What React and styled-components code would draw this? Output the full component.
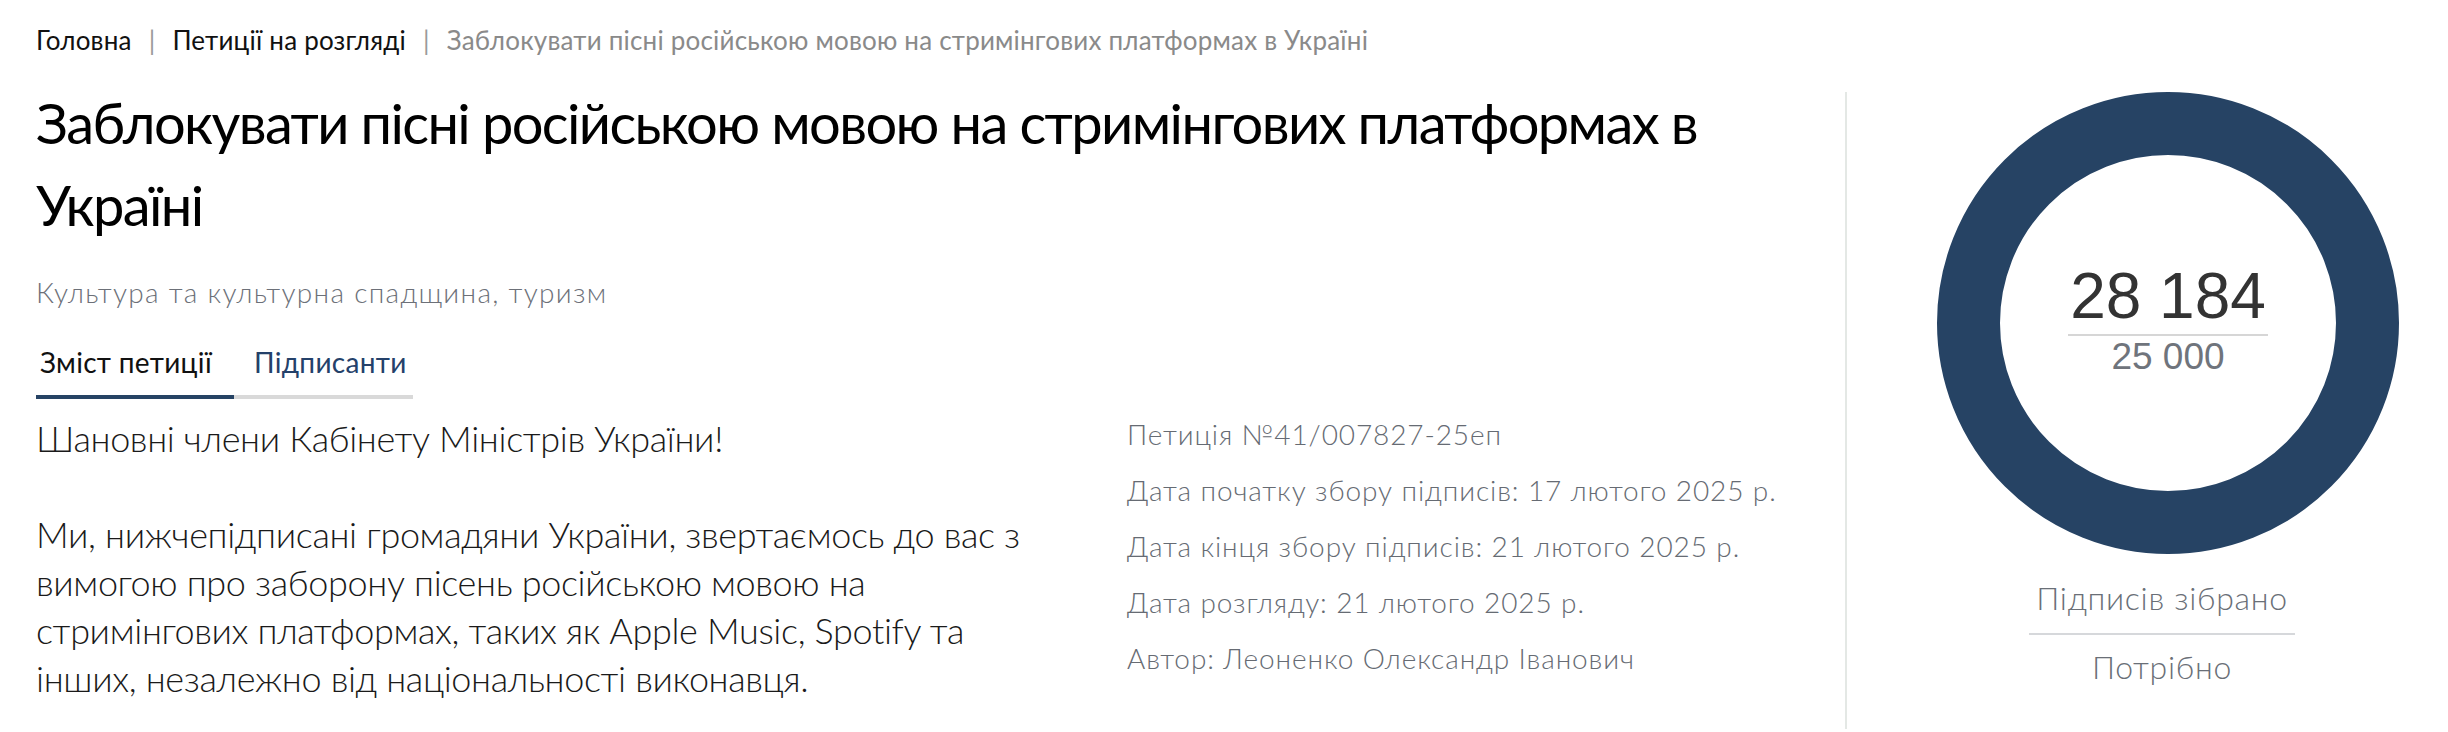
import styled, { createGlobalStyle } from 'styled-components';

const GlobalStyle = createGlobalStyle`
  html, body {
    margin: 0;
    padding: 0;
    background: #FFFFFF;
  }
  body {
    font-family: Lato, 'Noto Sans', sans-serif;
    color: #1F1F1F;
  }
  * { box-sizing: border-box; }
`;

const Page = styled.div`
  padding: 22px 0 0 36px;
  width: 2448px;
  overflow: hidden;
`;

const Crumbs = styled.nav`
  display: flex;
  align-items: center;
  font-size: 26px;
  line-height: 36px;
  letter-spacing: 0.2px;
  white-space: nowrap;
`;

const Crumb = styled.span`
  color: ${({ $current }) => ($current ? '#8A8A8A' : '#111111')};
`;

const Sep = styled.span`
  color: #9A9A9A;
  margin: 0 17px;
`;

const Main = styled.div`
  display: flex;
  margin-top: 24px;
`;

const LeftCol = styled.div`
  flex: 1;
  padding-right: 40px;
  min-width: 0;
`;

const Title = styled.h1`
  margin: 0;
  font-size: 56px;
  line-height: 82px;
  font-weight: 400;
  letter-spacing: -1.6px;
  color: #000000;
  max-width: 1740px;
`;

const Category = styled.p`
  margin: 26px 0 0;
  font-size: 28px;
  line-height: 40px;
  letter-spacing: 1.3px;
  font-weight: 300;
  color: #6C7078;
`;

const Tabs = styled.div`
  display: flex;
  margin-top: 30px;
`;

const Tab = styled.div`
  font-size: 28px;
  line-height: 40px;
  letter-spacing: 0.3px;
  padding: 0 ${({ $active }) => ($active ? '22px' : '6px')} 13px ${({ $active }) => ($active ? '4px' : '20px')};
  color: ${({ $active }) => ($active ? '#111111' : '#24416A')};
  border-bottom: 4px solid ${({ $active }) => ($active ? '#264364' : '#D9D9D9')};
`;

const Content = styled.div`
  display: grid;
  grid-template-columns: 1080px 1fr;
  column-gap: 11px;
  margin-top: 7px;
`;

const Body = styled.div`
  padding-top: 8px;
  font-size: 36px;
  line-height: 48px;
  font-weight: 300;
  letter-spacing: -0.35px;
  color: #1A1A1A;
`;

const Para = styled.p`
  margin: 0 0 48px;
  white-space: nowrap;
  &:last-child { margin-bottom: 0; }
`;

const Meta = styled.div`
  display: flex;
  flex-direction: column;
`;

const MetaLine = styled.div`
  font-size: 28px;
  line-height: 56px;
  font-weight: 300;
  letter-spacing: 0.9px;
  color: #666B73;
  white-space: nowrap;
`;

const RightCol = styled.aside`
  flex: 0 0 603px;
  margin-top: 10px;
  border-left: 2px solid #E4E8E5;
  padding: 0 0 40px 90px;
  display: flex;
  flex-direction: column;
  align-items: flex-start;
`;

const Ring = styled.div`
  width: 462px;
  height: 462px;
  border-radius: 50%;
  border: 63px solid #264364;
  display: flex;
  align-items: center;
  justify-content: center;
`;

const Counts = styled.div`
  display: flex;
  flex-direction: column;
  align-items: center;
  font-family: 'Liberation Sans', Arial, sans-serif;
  margin-top: -4px;
`;

const Collected = styled.div`
  font-size: 64px;
  line-height: 64px;
  color: #333333;
  padding: 0 2px 6px;
  border-bottom: 2px solid #D6D6D6;
`;

const Needed = styled.div`
  font-size: 37px;
  line-height: 42px;
  color: #6F747C;
`;

const Labels = styled.div`
  width: 266px;
  margin: 22px 0 0 92px;
  display: flex;
  flex-direction: column;
  align-items: center;
`;

const Label = styled.div`
  width: 100%;
  text-align: center;
  font-size: 32px;
  line-height: 44px;
  font-weight: 300;
  letter-spacing: 0.7px;
  color: #6A6F77;
  padding-bottom: ${({ $top }) => ($top ? '13px' : '0')};
  margin-top: ${({ $top }) => ($top ? '0' : '10px')};
  border-bottom: ${({ $top }) => ($top ? '2px solid #D6D8DB' : 'none')};
`;

export default function App() {
  return (
    <>
      <GlobalStyle />
      <Page>
        <Crumbs>
          <Crumb>Головна</Crumb>
          <Sep>|</Sep>
          <Crumb>Петиції на розгляді</Crumb>
          <Sep>|</Sep>
          <Crumb $current>Заблокувати пісні російською мовою на стримінгових платформах в Україні</Crumb>
        </Crumbs>

        <Main>
          <LeftCol>
            <Title>Заблокувати пісні російською мовою на стримінгових платформах в Україні</Title>
            <Category>Культура та культурна спадщина, туризм</Category>
            <Tabs>
              <Tab $active>Зміст петиції</Tab>
              <Tab>Підписанти</Tab>
            </Tabs>
            <Content>
              <Body>
                <Para>Шановні члени Кабінету Міністрів України!</Para>
                <Para>
                  Ми, нижчепідписані громадяни України, звертаємось до вас з<br />
                  вимогою про заборону пісень російською мовою на<br />
                  стримінгових платформах, таких як Apple Music, Spotify та<br />
                  інших, незалежно від національності виконавця.
                </Para>
              </Body>
              <Meta>
                <MetaLine>Петиція №41/007827-25еп</MetaLine>
                <MetaLine>Дата початку збору підписів: 17 лютого 2025 р.</MetaLine>
                <MetaLine>Дата кінця збору підписів: 21 лютого 2025 р.</MetaLine>
                <MetaLine>Дата розгляду: 21 лютого 2025 р.</MetaLine>
                <MetaLine>Автор: Леоненко Олександр Іванович</MetaLine>
              </Meta>
            </Content>
          </LeftCol>

          <RightCol>
            <Ring>
              <Counts>
                <Collected>28 184</Collected>
                <Needed>25 000</Needed>
              </Counts>
            </Ring>
            <Labels>
              <Label $top>Підписів зібрано</Label>
              <Label>Потрібно</Label>
            </Labels>
          </RightCol>
        </Main>
      </Page>
    </>
  );
}
